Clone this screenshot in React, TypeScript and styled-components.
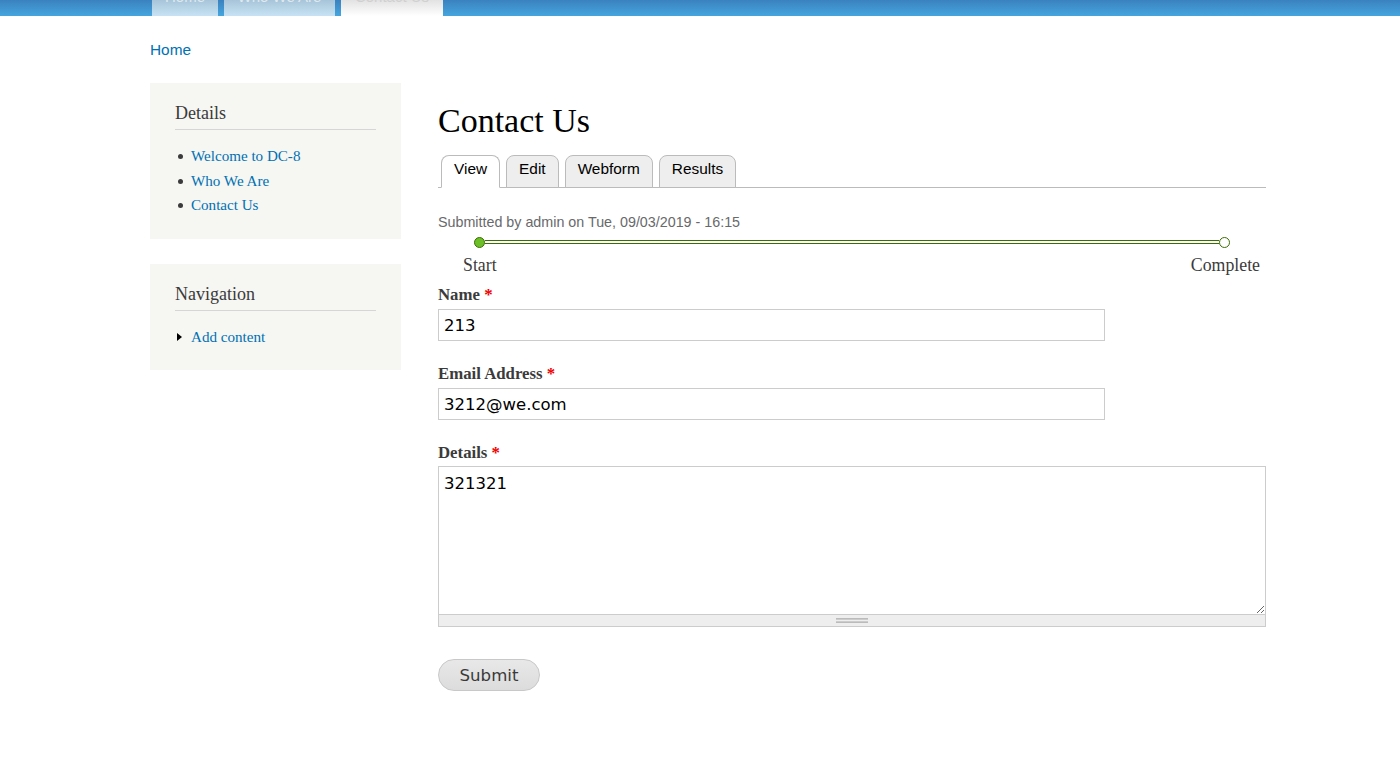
import styled, { createGlobalStyle } from 'styled-components';

const GlobalStyle = createGlobalStyle`
  html, body {
    margin: 0;
    padding: 0;
    background: #fff;
  }
  body {
    font-family: "Liberation Serif", "Times New Roman", serif;
    color: #3b3b3b;
  }
  * {
    box-sizing: border-box;
  }
`;

const sidebarBlocks = [
  {
    title: 'Details',
    marker: 'disc' as const,
    links: ['Welcome to DC-8', 'Who We Are', 'Contact Us'],
  },
  {
    title: 'Navigation',
    marker: 'arrow' as const,
    links: ['Add content'],
  },
];

const topMenu = [
  { label: 'Home', width: 66 },
  { label: 'Who We Are', width: 111 },
  { label: 'Contact Us', width: 102, active: true },
];

const tabs = [
  { label: 'View', active: true },
  { label: 'Edit' },
  { label: 'Webform' },
  { label: 'Results' },
];

export default function App() {
  return (
    <>
      <GlobalStyle />
      <TopBar>
        <TopMenu>
          {topMenu.map(item => (
            <TopItem key={item.label} $active={item.active} style={{ width: item.width }}>
              <span>{item.label}</span>
            </TopItem>
          ))}
        </TopMenu>
      </TopBar>
      <Page>
        <Breadcrumb href="#">Home</Breadcrumb>
        <Columns>
          <Sidebar>
            {sidebarBlocks.map(block => (
              <Block key={block.title}>
                <BlockTitle>{block.title}</BlockTitle>
                <LinkList>
                  {block.links.map(link => (
                    <LinkItem key={link} $marker={block.marker}>
                      <SideLink href="#">{link}</SideLink>
                    </LinkItem>
                  ))}
                </LinkList>
              </Block>
            ))}
          </Sidebar>
          <Main>
            <Title>Contact Us</Title>
            <Tabs>
              {tabs.map(tab => (
                <Tab key={tab.label} $active={tab.active}>
                  {tab.label}
                </Tab>
              ))}
            </Tabs>
            <Submitted>Submitted by admin on Tue, 09/03/2019 - 16:15</Submitted>
            <Progress>
              <Track>
                <Dot $done />
                <Line />
                <Dot />
              </Track>
              <Steps>
                <Step>Start</Step>
                <Step>Complete</Step>
              </Steps>
            </Progress>
            <Field>
              <Label>
                Name <Req>*</Req>
              </Label>
              <TextInput defaultValue="213" />
            </Field>
            <Field>
              <Label>
                Email Address <Req>*</Req>
              </Label>
              <TextInput defaultValue="3212@we.com" />
            </Field>
            <Field $gap={23}>
              <Label $tight>
                Details <Req>*</Req>
              </Label>
              <TextArea defaultValue="321321" />
              <Grip>
                <GripBar />
              </Grip>
            </Field>
            <SubmitButton>Submit</SubmitButton>
          </Main>
        </Columns>
      </Page>
    </>
  );
}

const TopBar = styled.header`
  height: 16px;
  background: linear-gradient(to bottom, #3a82bf 0%, #45a5de 100%);
  overflow: hidden;
`;

const TopMenu = styled.ul`
  display: flex;
  gap: 6px;
  margin: 0;
  padding: 0 0 0 152px;
  list-style: none;
  height: 16px;
`;

const TopItem = styled.li<{ $active?: boolean }>`
  height: 16px;
  display: flex;
  justify-content: center;
  overflow: hidden;
  background: ${p =>
    p.$active
      ? 'linear-gradient(to bottom, #e2e2e2 0%, #ffffff 100%)'
      : 'linear-gradient(to bottom, #a8c4d8 0%, #c6e2f4 100%)'};
  font-family: "Liberation Sans", Arial, sans-serif;
  font-size: 15px;
  color: ${p => (p.$active ? '#d0d0d0' : '#dfe9ef')};
  span {
    display: block;
    line-height: 15px;
    margin-top: -11px;
  }
`;

const Page = styled.div`
  padding: 25px 0 0 150px;
  width: 1266px;
`;

const Breadcrumb = styled.a`
  display: block;
  font-family: "Liberation Sans", Arial, sans-serif;
  font-size: 15.4px;
  line-height: 18px;
  color: #0071b3;
  text-decoration: none;
`;

const Columns = styled.div`
  display: flex;
  gap: 37px;
  margin-top: 24px;
`;

const Sidebar = styled.aside`
  width: 251px;
  flex-shrink: 0;
  display: flex;
  flex-direction: column;
  gap: 25px;
`;

const Block = styled.section`
  background: #f6f6f2;
  padding: 20px 25px 21px;
`;

const BlockTitle = styled.h2`
  margin: 0;
  font-size: 18px;
  font-weight: normal;
  line-height: 20px;
  padding-bottom: 6px;
  border-bottom: 1px solid #d6d6d6;
  color: #3b3b3b;
`;

const LinkList = styled.ul`
  margin: 14px 0 0;
  padding: 0;
  list-style: none;
`;

const LinkItem = styled.li<{ $marker: 'disc' | 'arrow' }>`
  position: relative;
  padding-left: 16px;
  font-size: 15.1px;
  line-height: 24.5px;
  &::before {
    content: '';
    position: absolute;
    ${p =>
      p.$marker === 'disc'
        ? `
      left: 3px;
      top: 10px;
      width: 5px;
      height: 5px;
      border-radius: 50%;
      background: #3b3b3b;
    `
        : `
      left: 2px;
      top: 8px;
      width: 0;
      height: 0;
      border-top: 4px solid transparent;
      border-bottom: 4px solid transparent;
      border-left: 5px solid #000;
    `}
  }
`;

const SideLink = styled.a`
  color: #0071b3;
  text-decoration: none;
`;

const Main = styled.main`
  flex: 1;
  min-width: 0;
`;

const Title = styled.h1`
  margin: 18px 0 0;
  font-size: 34px;
  font-weight: normal;
  line-height: 40px;
  color: #000;
`;

const Tabs = styled.ul`
  display: flex;
  gap: 6px;
  margin: 14px 0 0;
  padding: 0 0 0 3px;
  list-style: none;
  border-bottom: 1px solid #bbb;
  height: 33px;
`;

const Tab = styled.li<{ $active?: boolean }>`
  height: 33px;
  padding: 0 12px;
  border: 1px solid #bbb;
  border-bottom-color: ${p => (p.$active ? '#fff' : '#bbb')};
  border-radius: 8px 8px 0 0;
  background: ${p => (p.$active ? '#fff' : '#eee')};
  font-family: "Liberation Sans", Arial, sans-serif;
  font-size: 15.4px;
  line-height: 26px;
  color: #000;
`;

const Submitted = styled.p`
  margin: 24px 0 0;
  font-family: "Liberation Sans", Arial, sans-serif;
  font-size: 14.3px;
  line-height: 20px;
  color: #68696b;
`;

const Progress = styled.div`
  margin-top: 5px;
`;

const Track = styled.div`
  display: flex;
  align-items: center;
  padding: 0 36px;
  height: 10px;
`;

const Dot = styled.span<{ $done?: boolean }>`
  width: 11px;
  height: 11px;
  border-radius: 50%;
  flex-shrink: 0;
  border: 1px solid #3b6e00;
  background: ${p => (p.$done ? '#6cbf26' : '#fff')};
`;

const Line = styled.span`
  flex: 1;
  height: 4px;
  border-top: 1px solid #3b6e00;
  border-bottom: 1px solid #3b6e00;
  background: #fff;
`;

const Steps = styled.div`
  display: flex;
  justify-content: space-between;
  padding: 0 6px 0 25px;
  margin-top: 7px;
`;

const Step = styled.span`
  font-size: 17.8px;
  line-height: 22px;
  color: #3b3b3b;
`;

const Field = styled.div<{ $gap?: number }>`
  margin-top: 9px;
  & + & {
    margin-top: ${p => p.$gap ?? 21}px;
  }
`;

const Label = styled.label<{ $tight?: boolean }>`
  display: block;
  font-size: 16.8px;
  font-weight: bold;
  line-height: 20px;
  margin-bottom: ${p => (p.$tight ? '3px' : '4px')};
  color: #3b3b3b;
`;

const Req = styled.span`
  color: #e00;
`;

const TextInput = styled.input`
  display: block;
  width: 667px;
  height: 32px;
  padding: 0 5px;
  border: 1px solid #ccc;
  font-family: "DejaVu Sans", sans-serif;
  font-size: 16.5px;
  color: #000;
  background: #fff;
  outline: none;
`;

const TextArea = styled.textarea`
  display: block;
  width: 100%;
  height: 148px;
  padding: 6px 5px;
  border: 1px solid #ccc;
  border-bottom: 0;
  font-family: "DejaVu Sans", sans-serif;
  font-size: 16.5px;
  line-height: 22px;
  color: #000;
  resize: vertical;
  outline: none;
  margin: 0;
`;

const Grip = styled.div`
  height: 13px;
  border: 1px solid #ccc;
  background: #eee;
  display: flex;
  justify-content: center;
  align-items: center;
`;

const GripBar = styled.span`
  width: 32px;
  height: 5px;
  border-top: 1px solid #bbb;
  border-bottom: 1px solid #bbb;
  background: repeating-linear-gradient(to bottom, #ccc 0 1px, transparent 1px 2px);
`;

const SubmitButton = styled.button`
  display: block;
  margin-top: 32px;
  width: 102px;
  height: 32px;
  border: 1px solid #c8c8c8;
  border-radius: 16px;
  background: linear-gradient(to bottom, #e8e8e8 0%, #dcdcdc 100%);
  font-family: "DejaVu Sans", sans-serif;
  font-size: 16.6px;
  color: #3a3a3a;
  padding: 0;
  cursor: pointer;
`;
